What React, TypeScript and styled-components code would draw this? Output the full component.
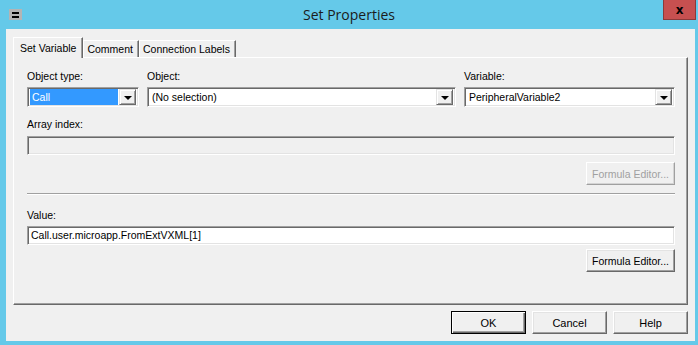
import React from "react";
import styled, { createGlobalStyle, css } from "styled-components";

const Global = createGlobalStyle`
  html, body { margin: 0; padding: 0; overflow: hidden; }
  body { width: 698px; height: 345px; background: #65c9e9; }
  * { box-sizing: border-box; }
`;

const Window = styled.div`
  width: 698px;
  height: 345px;
  background: #65c9e9;
  display: flex;
  flex-direction: column;
  font-family: "Liberation Sans", Arial, sans-serif;
  font-size: 10.5px;
  color: #000;
`;

const TitleBar = styled.div`
  height: 29px;
  display: grid;
  grid-template-columns: 1fr auto 1fr;
  align-items: start;
`;

const SysIcon = styled.div`
  margin: 9px 0 0 9px;
  width: 13px;
  height: 11px;
  background: #b4b4b4;
  display: flex;
  flex-direction: column;
  align-items: center;
  justify-content: center;
  gap: 2px;
`;

const IconBar = styled.div`
  width: 7px;
  height: 2px;
  background: #000;
`;

const Title = styled.div`
  padding-top: 5px;
  font-family: "Open Sans", "Noto Sans", sans-serif;
  font-size: 14px;
  line-height: 20px;
  color: #1b1b1b;
`;

const CloseBtn = styled.div`
  justify-self: end;
  margin-right: 2px;
  width: 33px;
  height: 20px;
  background: #c75050;
  border: 1px solid #8c3a3a;
  border-top: none;
  display: flex;
  align-items: center;
  justify-content: center;
  font-family: "DejaVu Sans", sans-serif;
  font-weight: bold;
  font-size: 12px;
  line-height: 12px;
  color: #000;
`;

const Client = styled.div`
  flex: 1;
  margin: 0 3px 4px 6px;
  background: #f0f0f0;
  padding: 8px 7px 7px 7px;
  display: flex;
  flex-direction: column;
`;

const TabStrip = styled.div`
  height: 20px;
  display: flex;
  align-items: flex-end;
  position: relative;
  z-index: 1;
`;

const Tab = styled.div<{ $active?: boolean }>`
  height: 17px;
  padding: 0 5px 0 3px;
  display: flex;
  align-items: center;
  border-top: 1px solid #fff;
  border-left: 1px solid #fff;
  border-right: 1px solid #696969;
  box-shadow: inset -1px 0 #a0a0a0;
  background: #f0f0f0;
  white-space: nowrap;
  ${(p) =>
    p.$active &&
    css`
      height: 21px;
      margin-bottom: -1px;
      padding: 0 6px 1px 6px;
    `}
`;

const Panel = styled.div`
  height: 248px;
  border-top: 1px solid #fff;
  border-left: 1px solid #fff;
  border-right: 1px solid #696969;
  border-bottom: 1px solid #696969;
  box-shadow: inset -1px -1px #a0a0a0;
  padding: 12px 12px 0 13px;
  display: flex;
  flex-direction: column;
`;

const FieldRow = styled.div`
  display: grid;
  grid-template-columns: 112px 309px 211px;
  justify-content: space-between;
`;

const Field = styled.div`
  display: flex;
  flex-direction: column;
  gap: 4px;
`;

const Label = styled.div<{ $top?: number }>`
  line-height: 13px;
  height: 13px;
  margin-top: ${(p) => p.$top ?? 0}px;
`;

const sunken = css`
  border: 1px solid;
  border-color: #a0a0a0 #fff #fff #a0a0a0;
  box-shadow: inset 1px 1px #696969, inset -1px -1px #e3e3e3;
`;

const Combo = styled.div`
  ${sunken};
  height: 20px;
  background: #fff;
  display: flex;
  align-items: center;
  padding: 2px;
`;

const ComboText = styled.div<{ $selected?: boolean }>`
  flex: 1;
  height: 16px;
  line-height: 16px;
  padding-left: 2px;
  white-space: nowrap;
  overflow: hidden;
  ${(p) =>
    p.$selected &&
    css`
      background: #3399ff;
      color: #fff;
      margin-right: 1px;
    `}
`;

const DropBtn = styled.div`
  width: 17px;
  height: 16px;
  background: #f0f0f0;
  border: 1px solid;
  border-color: #e3e3e3 #696969 #696969 #e3e3e3;
  box-shadow: inset 1px 1px #fff, inset -1px -1px #a0a0a0;
  display: flex;
  align-items: center;
  justify-content: center;
`;

const Arrow = styled.div`
  width: 0;
  height: 0;
  border-left: 4px solid transparent;
  border-right: 4px solid transparent;
  border-top: 4px solid #000;
  margin-top: 1px;
`;

const TextBox = styled.div<{ $disabled?: boolean; $top?: number }>`
  ${sunken};
  height: 19px;
  margin-top: ${(p) => p.$top ?? 0}px;
  background: ${(p) => (p.$disabled ? "#f0f0f0" : "#fff")};
  line-height: 17px;
  padding-left: 3px;
  white-space: nowrap;
`;

const ButtonBase = styled.div<{ $disabled?: boolean; $default?: boolean }>`
  height: 23px;
  background: #f0f0f0;
  border: 1px solid;
  border-color: #fff #696969 #696969 #fff;
  box-shadow: inset -1px -1px #a0a0a0, inset 1px 1px #e3e3e3;
  display: flex;
  align-items: center;
  justify-content: center;
  white-space: nowrap;
  color: ${(p) => (p.$disabled ? "#a0a0a0" : "#000")};
  ${(p) =>
    p.$disabled &&
    css`
      border-color: #fff #a0a0a0 #a0a0a0 #fff;
      box-shadow: inset -1px -1px #d4d4d4;
    `}
  ${(p) =>
    p.$default &&
    css`
      border-color: #000;
      box-shadow: inset 1px 1px #fff, inset -1px -1px #696969,
        inset -2px -2px #a0a0a0;
    `}
`;

const FormulaButton = styled(ButtonBase)<{ $top: number }>`
  width: 89px;
  align-self: flex-end;
  margin-top: ${(p) => p.$top}px;
`;

const Separator = styled.div`
  margin-top: 8px;
  height: 2px;
  border-top: 1px solid #a0a0a0;
  border-bottom: 1px solid #fff;
`;

const ButtonRow = styled.div`
  margin-top: 6px;
  display: flex;
  justify-content: flex-end;
  gap: 6px;
`;

const DialogButton = styled(ButtonBase)`
  width: 75px;
  font-size: 11px;
`;

function ComboBox({ text, selected }: { text: string; selected?: boolean }) {
  return (
    <Combo>
      <ComboText $selected={selected}>{text}</ComboText>
      <DropBtn>
        <Arrow />
      </DropBtn>
    </Combo>
  );
}

export default function App() {
  return (
    <>
      <Global />
      <Window>
        <TitleBar>
          <SysIcon>
            <IconBar />
            <IconBar />
          </SysIcon>
          <Title>Set Properties</Title>
          <CloseBtn>x</CloseBtn>
        </TitleBar>
        <Client>
          <TabStrip>
            <Tab $active>Set Variable</Tab>
            <Tab>Comment</Tab>
            <Tab>Connection Labels</Tab>
          </TabStrip>
          <Panel>
            <FieldRow>
              <Field>
                <Label>Object type:</Label>
                <ComboBox text="Call" selected />
              </Field>
              <Field>
                <Label>Object:</Label>
                <ComboBox text="(No selection)" />
              </Field>
              <Field>
                <Label>Variable:</Label>
                <ComboBox text="PeripheralVariable2" />
              </Field>
            </FieldRow>
            <Label $top={11}>Array index:</Label>
            <TextBox $disabled $top={5} />
            <FormulaButton $disabled $top={7}>
              Formula Editor...
            </FormulaButton>
            <Separator />
            <Label $top={14}>Value:</Label>
            <TextBox $top={4}>Call.user.microapp.FromExtVXML[1]</TextBox>
            <FormulaButton $top={4}>Formula Editor...</FormulaButton>
          </Panel>
          <ButtonRow>
            <DialogButton $default>OK</DialogButton>
            <DialogButton>Cancel</DialogButton>
            <DialogButton>Help</DialogButton>
          </ButtonRow>
        </Client>
      </Window>
    </>
  );
}
